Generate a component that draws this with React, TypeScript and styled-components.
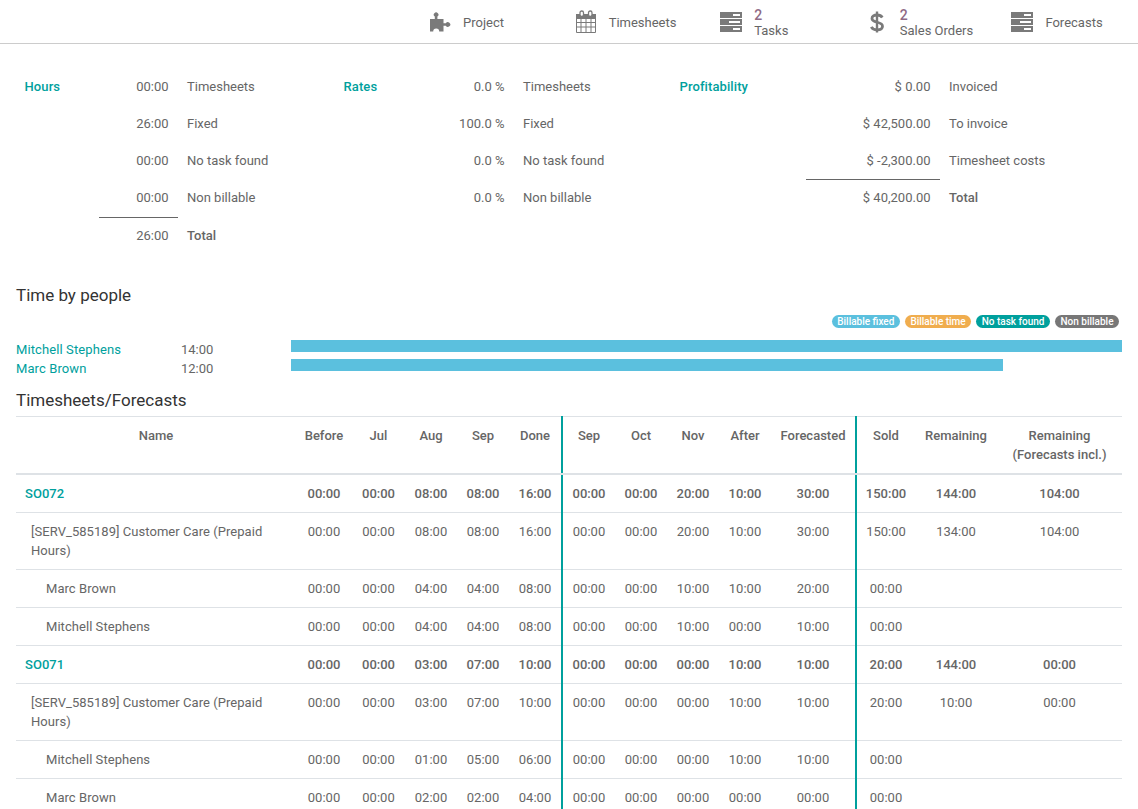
import * as React from 'react';
import styled, { createGlobalStyle } from 'styled-components';

const GlobalStyle = createGlobalStyle`
  html, body {
    margin: 0;
    height: 100%;
    overflow: hidden;
    background: #fff;
  }
  body {
    font-family: Roboto, "Liberation Sans", sans-serif;
    font-size: 13px;
    line-height: 19px;
    color: #666;
  }
`;

const teal = '#00a09d';

const Page = styled.div`
  height: 809px;
  overflow: hidden;
`;

const StatBar = styled.div`
  height: 43px;
  border-bottom: 1px solid #ccc;
  display: grid;
  grid-template-columns: repeat(5, 145.6px);
  justify-content: end;
`;

const StatButton = styled.div`
  display: flex;
  align-items: center;
  color: #666;
`;

const StatIcon = styled.div`
  width: 44px;
  margin-left: 8px;
  margin-right: 1px;
  display: flex;
  justify-content: center;
  color: #7a7a7a;
`;

const StatText = styled.div`
  line-height: 15px;
  margin-top: 2px;
`;

const StatCount = styled.div`
  color: #8f6a85;
  font-size: 14px;
  font-weight: 500;
`;

const Summary = styled.div`
  display: grid;
  grid-template-columns: 319px 336px 1fr;
  padding: 24px 0 0 15.5px;
`;

const SummaryTable = styled.div<{ $title: number; $value: number }>`
  display: grid;
  grid-template-columns: ${p => p.$title}px ${p => p.$value}px 1fr;
  align-content: start;
`;

const SummaryTitle = styled.div`
  padding: 9px;
  color: ${teal};
  font-weight: 500;
  letter-spacing: .1px;
`;

const SummaryValue = styled.div<{ $line?: boolean; $bottom: number; $top: number }>`
  padding: ${p => p.$top}px 9px ${p => p.$bottom}px;
  text-align: right;
  border-bottom: ${p => (p.$line ? '1px solid #666' : '0')};
`;

const SummaryLabel = styled.div<{ $bold?: boolean; $top: number }>`
  padding: ${p => p.$top}px 9px 9px 9.5px;
  font-weight: ${p => (p.$bold ? 500 : 400)};
`;

const Heading = styled.h2`
  margin: 0;
  padding-left: 16px;
  font-size: 17px;
  line-height: 22px;
  font-weight: 400;
  color: #333;
`;

const TimeHeading = styled(Heading)`
  margin-top: 30px;
`;

const TableHeading = styled(Heading)`
  margin-top: 11px;
`;

const Legend = styled.div`
  display: flex;
  justify-content: flex-end;
  gap: 5px;
  padding-right: 19px;
  margin-top: 9px;
`;

const Badge = styled.span<{ $color: string }>`
  background: ${p => p.$color};
  color: #fff;
  font-size: 10px;
  font-weight: 500;
  line-height: 13px;
  padding: 0 5.5px;
  border-radius: 7px;
`;

const People = styled.div`
  padding: 12px 16px 0;
`;

const PersonRow = styled.div`
  display: grid;
  grid-template-columns: 165px 110px 1fr;
  height: 19px;
`;

const PersonName = styled.div`
  color: ${teal};
  letter-spacing: .1px;
`;

const Bar = styled.div`
  height: 12px;
  background: #5bc0de;
`;

const Table = styled.table`
  width: 1106px;
  margin: 5px 0 0 16px;
  border-collapse: collapse;
  table-layout: fixed;
`;

const Th = styled.th<{ $sep?: boolean }>`
  border-top: 1px solid #dee2e6;
  border-bottom: 2px solid #dee2e6;
  border-right: ${p => (p.$sep ? `2px solid ${teal}` : '0')};
  padding: 9px 0;
  height: 38px;
  vertical-align: top;
  font-weight: 500;
  text-align: center;
  box-sizing: content-box;
`;

const Td = styled.td<{ $sep?: boolean; $bold?: boolean }>`
  border-top: 1px solid #dee2e6;
  border-right: ${p => (p.$sep ? `2px solid ${teal}` : '0')};
  padding: 9px 0;
  vertical-align: top;
  text-align: center;
  font-weight: ${p => (p.$bold ? 500 : 400)};
`;

const NameCell = styled.td<{ $level: number }>`
  border-top: 1px solid #dee2e6;
  padding: 9px 8px 9px ${p => [9, 15, 30][p.$level]}px;
  vertical-align: top;
  letter-spacing: .05px;
  color: ${p => (p.$level === 0 ? teal : '#666')};
  font-weight: ${p => (p.$level === 0 ? 500 : 400)};
`;

const PuzzleIcon = () => (
  <svg width="22" height="20" viewBox="0 0 22 20" fill="currentColor">
    <path d="M1 7h4.800V4.600a2.300 2.300 0 1 1 2.600 0V7h6.100v4.200h2.300a2.400 2.400 0 1 1 0 2.600h-2.300v5.700h-4.300a3 3 0 0 0-6 0H1z" />
  </svg>
);

const CalendarIcon = () => (
  <svg width="22" height="23" viewBox="0 0 22 23" fill="none" stroke="currentColor">
    <path d="M1.500 8h19v14.500h-19z M1.500 12.500h19 M1.500 17h19 M6 8v14.500 M11 8v14.500 M16 8v14.500" />
    <path d="M1 4h20v5H1z" fill="currentColor" stroke="none" />
    <rect x="5" y="1" width="3.500" height="5.500" rx="1.700" fill="#fff" strokeWidth="1.300" />
    <rect x="13.500" y="1" width="3.500" height="5.500" rx="1.700" fill="#fff" strokeWidth="1.300" />
  </svg>
);

const TasksIcon = () => (
  <svg width="22" height="20" viewBox="0 0 22 20" fill="currentColor">
    <path fillRule="evenodd" d="M0 0h22v6H0z M13 2v2h7V2z" />
    <path fillRule="evenodd" d="M0 7h22v6H0z M9 9v2h11V9z" />
    <path fillRule="evenodd" d="M0 14h22v6H0z M13 16v2h7v-2z" />
  </svg>
);

const DollarIcon = () => (
  <svg width="14" height="24" viewBox="0 0 14 24" fill="none" stroke="currentColor">
    <path strokeWidth="2.800" d="M12.300 7.500C11.300 5.800 9.500 5 7 5 4 5 2 6.300 2 8.500c0 5 10.500 2.500 10.500 7.700 0 2.300-2.300 3.600-5.400 3.600-2.700 0-4.800-1-5.800-3" />
    <path strokeWidth="2.400" d="M7 1.500v21" />
  </svg>
);

const stats = [
  { icon: <PuzzleIcon />, label: 'Project' },
  { icon: <CalendarIcon />, label: 'Timesheets' },
  { icon: <TasksIcon />, label: 'Tasks', count: 2 },
  { icon: <DollarIcon />, label: 'Sales Orders', count: 2 },
  { icon: <TasksIcon />, label: 'Forecasts' },
];

// lineRow: row with the rule under its value, lineBottom: padding above that rule
const summaries = [
  {
    title: 'Hours', titleWidth: 83, valueWidth: 79, lineRow: 3, lineBottom: 10, nextTop: 8,
    rows: [['00:00', 'Timesheets'], ['26:00', 'Fixed'], ['00:00', 'No task found'], ['00:00', 'Non billable'], ['26:00', 'Total']],
  },
  {
    title: 'Rates', titleWidth: 83, valueWidth: 96, lineRow: -1, lineBottom: 9, nextTop: 9,
    rows: [['0.0 %', 'Timesheets'], ['100.0 %', 'Fixed'], ['0.0 %', 'No task found'], ['0.0 %', 'Non billable']],
  },
  {
    title: 'Profitability', titleWidth: 135, valueWidth: 134, lineRow: 2, lineBottom: 9, nextTop: 8,
    rows: [['$ 0.00', 'Invoiced'], ['$ 42,500.00', 'To invoice'], ['$ -2,300.00', 'Timesheet costs'], ['$ 40,200.00', 'Total']],
  },
];

const legend = [
  ['Billable fixed', '#5bc0de'],
  ['Billable time', '#f0ad4e'],
  ['No task found', teal],
  ['Non billable', '#777'],
];

const people = [
  { name: 'Mitchell Stephens', time: '14:00', hours: 14 },
  { name: 'Marc Brown', time: '12:00', hours: 12 },
];

const colWidths = [280, 56, 53, 52, 52, 53, 53, 52, 52, 52, 85, 59, 82, 125];
const headers = ['Name', 'Before', 'Jul', 'Aug', 'Sep', 'Done', 'Sep', 'Oct', 'Nov', 'After', 'Forecasted', 'Sold', 'Remaining'];
const sepAfter = [5, 10];

const rows: { level: number; name: string; cells: string[] }[] = [
  { level: 0, name: 'SO072', cells: ['00:00', '00:00', '08:00', '08:00', '16:00', '00:00', '00:00', '20:00', '10:00', '30:00', '150:00', '144:00', '104:00'] },
  { level: 1, name: '[SERV_585189] Customer Care (Prepaid Hours)', cells: ['00:00', '00:00', '08:00', '08:00', '16:00', '00:00', '00:00', '20:00', '10:00', '30:00', '150:00', '134:00', '104:00'] },
  { level: 2, name: 'Marc Brown', cells: ['00:00', '00:00', '04:00', '04:00', '08:00', '00:00', '00:00', '10:00', '10:00', '20:00', '00:00', '', ''] },
  { level: 2, name: 'Mitchell Stephens', cells: ['00:00', '00:00', '04:00', '04:00', '08:00', '00:00', '00:00', '10:00', '00:00', '10:00', '00:00', '', ''] },
  { level: 0, name: 'SO071', cells: ['00:00', '00:00', '03:00', '07:00', '10:00', '00:00', '00:00', '00:00', '10:00', '10:00', '20:00', '144:00', '00:00'] },
  { level: 1, name: '[SERV_585189] Customer Care (Prepaid Hours)', cells: ['00:00', '00:00', '03:00', '07:00', '10:00', '00:00', '00:00', '00:00', '10:00', '10:00', '20:00', '10:00', '00:00'] },
  { level: 2, name: 'Mitchell Stephens', cells: ['00:00', '00:00', '01:00', '05:00', '06:00', '00:00', '00:00', '00:00', '10:00', '10:00', '00:00', '', ''] },
  { level: 2, name: 'Marc Brown', cells: ['00:00', '00:00', '02:00', '02:00', '04:00', '00:00', '00:00', '00:00', '00:00', '00:00', '00:00', '', ''] },
];

const App = () => {
  const maxHours = Math.max(...people.map(p => p.hours));
  return (
    <Page>
      <GlobalStyle />
      <StatBar>
        {stats.map(s => (
          <StatButton key={s.label}>
            <StatIcon>{s.icon}</StatIcon>
            <StatText>
              {s.count !== undefined && <StatCount>{s.count}</StatCount>}
              <div>{s.label}</div>
            </StatText>
          </StatButton>
        ))}
      </StatBar>

      <Summary>
        {summaries.map(t => (
          <SummaryTable key={t.title} $title={t.titleWidth} $value={t.valueWidth}>
            {t.rows.map((r, i) => {
              const top = i === t.lineRow + 1 ? t.nextTop : 9;
              return (
                <React.Fragment key={i}>
                  {i === 0 ? <SummaryTitle>{t.title}</SummaryTitle> : <div />}
                  <SummaryValue $line={i === t.lineRow} $top={top} $bottom={i === t.lineRow ? t.lineBottom : 9}>{r[0]}</SummaryValue>
                  <SummaryLabel $bold={r[1] === 'Total'} $top={top}>{r[1]}</SummaryLabel>
                </React.Fragment>
              );
            })}
          </SummaryTable>
        ))}
      </Summary>

      <TimeHeading>Time by people</TimeHeading>
      <Legend>
        {legend.map(([label, color]) => (
          <Badge key={label} $color={color}>{label}</Badge>
        ))}
      </Legend>
      <People>
        {people.map(p => (
          <PersonRow key={p.name}>
            <PersonName>{p.name}</PersonName>
            <div>{p.time}</div>
            <Bar style={{ width: `${(p.hours / maxHours) * 100}%` }} />
          </PersonRow>
        ))}
      </People>

      <TableHeading>Timesheets/Forecasts</TableHeading>
      <Table>
        <colgroup>
          {colWidths.map((w, i) => <col key={i} style={{ width: w }} />)}
        </colgroup>
        <thead>
          <tr>
            {headers.map((h, i) => (
              <Th key={i} $sep={sepAfter.includes(i)}>{h}</Th>
            ))}
            <Th>Remaining<br />(Forecasts incl.)</Th>
          </tr>
        </thead>
        <tbody>
          {rows.map((r, i) => (
            <tr key={i}>
              <NameCell $level={r.level}>{r.name}</NameCell>
              {r.cells.map((c, j) => (
                <Td key={j} $bold={r.level === 0} $sep={sepAfter.includes(j + 1)}>{c}</Td>
              ))}
            </tr>
          ))}
        </tbody>
      </Table>
    </Page>
  );
};

export default App;
